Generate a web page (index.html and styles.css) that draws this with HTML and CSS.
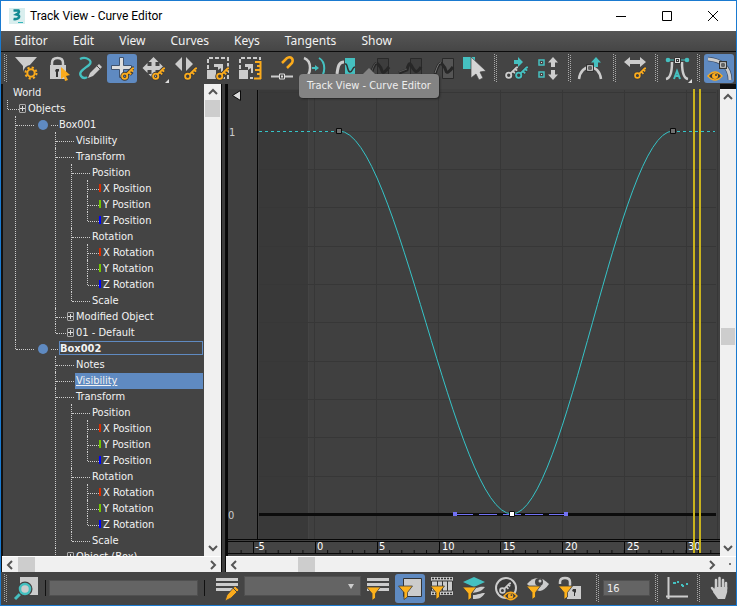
FILE: index.html
```html
<!DOCTYPE html>
<html lang="en">
<head>
<meta charset="utf-8">
<title>Track View - Curve Editor</title>
<link rel="stylesheet" href="styles.css">
</head>
<body>
<svg class="defs" aria-hidden="true">
  <defs>
    <symbol id="key" viewBox="0 0 14 14" overflow="visible">
      <g fill="none" stroke="#3c3c3c" stroke-width="4"><circle cx="4" cy="10" r="2.800"/><path d="M6 8 12.500 1.500H14M9 5l3 3"/></g>
      <g fill="none" stroke="currentColor" stroke-width="2"><circle cx="4" cy="10" r="2.800"/><path d="M6 8 12.500 1.500H14M8.500 5.500l2.500 2.500M11 3l2 2"/></g>
    </symbol>
    <symbol id="funnel" viewBox="0 0 13 13" overflow="visible">
      <path d="M-.5 0h14L8.500 6.500V11L5 13.500v-7z" fill="#fdb11b" stroke="#3c3c3c" stroke-width=".8"/>
    </symbol>
    <symbol id="eye" viewBox="0 0 14 8" overflow="visible">
      <path d="M0 4Q7-4 14 4 7 12 0 4z" fill="#3c3c3c" stroke="currentColor" stroke-width="1.500"/><circle cx="7" cy="4" r="3" fill="currentColor"/><circle cx="8" cy="3" r="1" fill="#3c3c3c"/>
    </symbol>
    <symbol id="corner" viewBox="0 0 4 4"><path d="M4 0v4H0z" fill="#ddd"/></symbol>
    <symbol id="node" viewBox="0 0 7 7"><path d="M.5.5h6v6h-6z" fill="#ddd" stroke="#333"/><path d="M2 2h3v3H2z" fill="#333"/><path d="M3 3h1v1H3z" fill="#ddd"/></symbol>
    <symbol id="up" viewBox="0 0 10 10"><path d="M5 0l5 5.500H7V10H3V5.500H0z" fill="currentColor"/></symbol>
  </defs>
</svg>
<div class="window">
  <header class="titlebar">
    <svg class="app-icon" width="16" height="16" viewBox="0 0 16 16"><path fill="#d9eeee" d="M0 0h16v16H0z"/><path d="M4.500 2.500h5q1.500 2-2 4 4 1 2 3.500-2 1.500-5 1" fill="none" stroke="#128a92" stroke-width="2.600"/><path d="M9 14.500h5" stroke="#35b5bb"/></svg>
    <h1>Track View - Curve Editor</h1>
    <div class="caption">
      <button aria-label="Minimize"><svg width="12" height="12" viewBox="0 0 12 12"><path d="M1 6.500h10"/></svg></button>
      <button aria-label="Maximize"><svg width="12" height="12" viewBox="0 0 12 12"><path d="M1.500 1.500h9v9h-9z"/></svg></button>
      <button aria-label="Close"><svg width="12" height="12" viewBox="0 0 12 12"><path d="M1 1l10 10M11 1 1 11"/></svg></button>
    </div>
  </header>
  <nav class="menu">
    <button>Editor</button><button>Edit</button><button>View</button><button>Curves</button><button>Keys</button><button>Tangents</button><button>Show</button>
  </nav>
  <div class="toolbar" role="toolbar">
    <span class="grip"></span>
    <button class="tool" aria-label="Filters"><svg viewBox="0 0 30 29"><path d="M4 3h22l-8 9v11l-6-6v-5z" fill="#ccc"/><circle cx="20" cy="19" r="5.500" fill="none" stroke="#444" stroke-width="5"/><circle cx="20" cy="19" r="5.500" fill="none" stroke="#fbab1c" stroke-width="2" stroke-dasharray="2.160 2.160"/><circle cx="20" cy="19" r="3.700" fill="#444" stroke="#fbab1c" stroke-width="2"/></svg></button>
    <button class="tool" aria-label="Lock selection"><svg viewBox="0 0 30 29"><path d="M9 12V9q0-5 5.500-5T20 9v3" fill="none" stroke="#ccc" stroke-width="2.500"/><path d="M7 11h16v14H7z" fill="#ccc"/><path d="M13 15h3v2l-1 1v5h-2v-5l-1-1z" fill="#333"/><path d="M18 13l9 8-4 1 2 4-3 1-1-4-3 2z" fill="#fbab1c"/></svg></button>
    <button class="tool" aria-label="Draw curves"><svg viewBox="0 0 30 29"><path d="M5 5c6-3 14 2 9 6S3 18 6 22c2 3 5 2 6 1" fill="none" stroke="#45c0c0" stroke-width="2.300"/><path d="M24 10l3 3-9 9-5 2 2-5z" fill="#ccc"/><path d="M22 12l3 3" stroke="#444"/></svg></button>
    <button class="tool active" aria-label="Add keys"><svg viewBox="0 0 30 29"><path d="M12.500 3.500h4v8h8v4h-8v8h-4v-8h-8v-4h8z" fill="#ddd" stroke="#40536e"/><use href="#key" x="14" y="13" width="13" height="13" color="#fbab1c"/></svg></button>
    <button class="tool" aria-label="Move keys"><svg viewBox="0 0 30 29"><path d="M14.500 3l5 5h-3v4h4V9l5 5-5 5v-3h-4v4h3l-5 5-5-5h3v-4h-4v3l-5-5 5-5v3h4V8h-3z" fill="#ccc"/><use href="#key" x="13" y="13" width="13" height="13" color="#fbab1c"/><use href="#corner" x="26" y="25" width="4" height="4"/></svg></button>
    <button class="tool" aria-label="Slide keys"><svg viewBox="0 0 30 29"><path d="M4 10l7-7v14zM22 10l-7-7v14z" fill="#ccc"/><use href="#key" x="13" y="13" width="13" height="13" color="#fbab1c"/></svg></button>
    <button class="tool" aria-label="Scale keys"><svg viewBox="0 0 30 29"><path d="M5 15V4h20v20H15" fill="none" stroke="#ccc" stroke-width="2" stroke-dasharray="4 2"/><path d="M4 16h9v9H4zM11 10h9v9h-2v-5l-3 2v-3h-4z" fill="#ccc"/><use href="#key" x="13" y="13" width="13" height="13" color="#fbab1c"/></svg></button>
    <button class="tool" aria-label="Scale values"><svg viewBox="0 0 30 29"><path d="M5 15V4h20v2M15 24h3" fill="none" stroke="#ccc" stroke-width="2" stroke-dasharray="4 2"/><path d="M4 16h9v9H4zM10 10h8v9h-2v-5l-3 2v-3h-3z" fill="#ccc"/><path d="M20 8h5M22 12h3M20 16h5M22 20h3M19 24.500h7M25.500 7v18" fill="none" stroke="#fbab1c" stroke-width="2"/></svg></button>
    <button class="tool" aria-label="Snap frames"><svg viewBox="0 0 30 29"><path d="M15 9l5-5c4-2 7 1 5 5l-5 5" fill="none" stroke="#fbab1c" stroke-width="2.500"/><path d="M4 22.500h8M18 22.500h8" stroke="#ccc" stroke-width="2"/><path d="M12.500 20h5v5h-5z" fill="none" stroke="#ddd"/><path d="M14 21.500h2v2h-2z" fill="#ddd"/></svg></button>
    <button class="tool" aria-label="Parameter out-of-range"><svg viewBox="0 0 30 29"><path d="M5 4c8 3 8 16 0 21" fill="none" stroke="#ccc" stroke-width="2.500"/><path d="M20 4c7 4 7 16 0 21M13 14h4" fill="none" stroke="#45c0c0" stroke-width="2"/><path d="M16 11l4 3-4 3z" fill="#45c0c0"/></svg></button>
    <button class="tool" aria-label="Ease curve"><svg viewBox="0 0 30 29"><path d="M6 20c1-8 2-12 7-12" fill="none" stroke="#ccc" stroke-width="3"/><path d="M14 4h10v20H14z" fill="#45c0c0"/><path d="M14 10c3-1 2 8 5 8s2-5 5-5" fill="none" stroke="#333" stroke-width="1.500"/></svg></button>
    <button class="tool" aria-label="Ease curve on" disabled><svg viewBox="0 0 30 29"><path d="M14.500 4.500h11v20h-11z" fill="#3d3d3d" stroke="#292929"/><path d="M8 20q4-13 7-10t4 7 7-4" fill="none" stroke="#272727" stroke-width="3"/><path d="M8 19q4-12 6-10" fill="none" stroke="#555"/></svg></button>
    <button class="tool" aria-label="Ease curve delete" disabled><svg viewBox="0 0 30 29"><path d="M15.500 4.500h11v20h-11z" fill="#3d3d3d" stroke="#292929"/><path d="M4 19l8-3q2-9 4-5t4 6 6-4" fill="none" stroke="#272727" stroke-width="3"/><path d="M4 18l8-3" stroke="#555"/></svg></button>
    <button class="tool" aria-label="Multiplier curve" disabled><svg viewBox="0 0 30 29"><path d="M15.500 4.500h11v20h-11z" fill="#555" stroke="#292929"/><path d="M8 20q4-13 7-10t4 7 7-4" fill="none" stroke="#272727" stroke-width="3"/><path d="M8 19q4-12 6-10" fill="none" stroke="#777"/></svg></button>
    <button class="tool" aria-label="Select tool"><svg viewBox="0 0 30 29"><path d="M4 3h12v12H4z" fill="#45c0c0"/><path d="M12 3l15 14-6 1 3 6-4 2-3-6-5 4z" fill="#d5d5d5" stroke="#444" stroke-width=".7"/></svg></button>
    <span class="grip"></span>
    <button class="tool" aria-label="Copy keys"><svg viewBox="0 0 30 29"><path d="M13 6h4V3l5 5-5 5v-3h-4z" fill="#45c0c0"/><use href="#key" x="4" y="12" width="13" height="13" color="#ccc"/><use href="#key" x="14" y="12" width="13" height="13" color="#45c0c0"/></svg></button>
    <button class="tool" aria-label="Flip keys"><svg viewBox="0 0 30 29"><path d="M6 6h5v5H6zM6 18h5v5H6z" fill="none" stroke="#45c0c0" stroke-width="1.500"/><path d="M8 8h1v1H8zM8 20h1v1H8z" fill="#ddd"/><g color="#ccc"><use href="#up" x="15" y="3" width="10" height="10"/><use href="#up" x="15" y="3" width="10" height="10" transform="matrix(1 0 0 -1 0 29)"/></g></svg></button>
    <span class="grip"></span>
    <button class="tool wide" aria-label="Tangent up"><svg viewBox="0 0 30 29"><path d="M4 25c2-16 20-16 22 0" fill="none" stroke="#ccc" stroke-width="2.500"/><use href="#up" x="16" y="3" width="10" height="10" color="#45c0c0"/><use href="#node" x="11" y="10" width="8" height="8"/></svg></button>
    <span class="grip"></span>
    <button class="tool" aria-label="Scale time"><svg viewBox="0 0 30 29"><path d="M4 8l6-5v3h10V3l6 5-6 5v-3H10v3z" fill="#ccc"/><use href="#key" x="14" y="13" width="12" height="12" color="#fbab1c"/></svg></button>
    <span class="grip"></span>
    <button class="tool" aria-label="Auto tangents"><svg viewBox="0 0 30 29"><path d="M10 8q0 16-6 17M20 8q0 16 6 17" fill="none" stroke="#ccc" stroke-width="2.500"/><path d="M6 6h19" stroke="#45c0c0"/><circle cx="6" cy="6" r="2.300" fill="#45c0c0"/><circle cx="25" cy="6" r="2.300" fill="#45c0c0"/><use href="#node" x="12" y="3" width="7" height="7"/><path d="M12 25l3-8 3 8M13 22h4" fill="none" stroke="#45c0c0" stroke-width="2"/><use href="#corner" x="26" y="25" width="4" height="4"/></svg></button>
    <span class="grip"></span>
    <button class="tool active" aria-label="Show tangents"><svg viewBox="0 0 30 29"><path d="M4 5c14 1 22 9 22 21" fill="none" stroke="#3c4d66" stroke-width="4.500"/><path d="M4 5c14 1 22 9 22 21" fill="none" stroke="#ccc" stroke-width="3"/><use href="#node" x="15" y="7" width="8" height="8"/><use href="#eye" x="4" y="18" width="14" height="8" color="#fbab1c"/></svg></button>
    <div class="tooltip" role="tooltip">Track View - Curve Editor</div>
  </div>

  <main class="workspace">
    <section class="tree-pane">
      <div class="tree">
        <ul class="root"><li><div class="row">World</div>
          <ul class="world"><li><div class="row plus">Objects</div>
            <ul class="objects">
              <li><div class="row"><span>Box001</span></div>
                <ul>
                  <li><div class="row">Visibility</div></li>
                  <li><div class="row">Transform</div>
                    <ul>
                      <li><div class="row">Position</div>
                        <ul class="axes"><li><div class="row x">X Position</div></li><li><div class="row y">Y Position</div></li><li><div class="row z">Z Position</div></li></ul></li>
                      <li><div class="row">Rotation</div>
                        <ul class="axes"><li><div class="row x">X Rotation</div></li><li><div class="row y">Y Rotation</div></li><li><div class="row z">Z Rotation</div></li></ul></li>
                      <li><div class="row">Scale</div></li>
                    </ul></li>
                  <li><div class="row plus">Modified Object</div></li>
                  <li><div class="row plus">01 - Default</div></li>
                </ul></li>
              <li><div class="row"><span class="current">Box002</span></div>
                <ul>
                  <li><div class="row">Notes</div></li>
                  <li><div class="row"><span class="selected">Visibility</span></div></li>
                  <li><div class="row">Transform</div>
                    <ul>
                      <li><div class="row">Position</div>
                        <ul class="axes"><li><div class="row x">X Position</div></li><li><div class="row y">Y Position</div></li><li><div class="row z">Z Position</div></li></ul></li>
                      <li><div class="row">Rotation</div>
                        <ul class="axes"><li><div class="row x">X Rotation</div></li><li><div class="row y">Y Rotation</div></li><li><div class="row z">Z Rotation</div></li></ul></li>
                      <li><div class="row">Scale</div></li>
                    </ul></li>
                  <li><div class="row plus">Object (Box)</div></li>
                </ul></li>
            </ul></li></ul></li></ul>
      </div>
      <div class="scroll vertical">
        <button aria-label="Scroll up"><svg width="10" height="10" viewBox="0 0 10 10"><path d="M1 7l4-4 4 4"/></svg></button>
        <i class="thumb"></i><i class="rest"></i>
        <button aria-label="Scroll down"><svg width="10" height="10" viewBox="0 0 10 10"><path d="M1 3l4 4 4-4"/></svg></button>
      </div>
      <div class="scroll horizontal">
        <button aria-label="Scroll left"><svg width="10" height="10" viewBox="0 0 10 10"><path d="M7 1 3 5l4 4"/></svg></button>
        <i class="thumb"></i><i class="rest"></i>
        <button aria-label="Scroll right"><svg width="10" height="10" viewBox="0 0 10 10"><path d="M3 1l4 4-4 4"/></svg></button>
      </div>
    </section>
    <div class="splitter"></div>
    <section class="graph-pane">
      <svg class="graph" viewBox="226 84 494 472" role="img" aria-label="Visibility curve">
        <defs>
          <pattern id="minor" x="253" y="550" width="12.360" height="3" patternUnits="userSpaceOnUse"><path d="M0 0h1v3H0z" fill="#0c0c0c"/></pattern>
        </defs>
        <path fill="#404040" d="M226 84h494v472H226z"/>
        <path fill="#444" d="M226 84h494v5H226z"/>
        <path fill="#393939" d="M259 90h49v449h-49z"/>
        <path stroke="#444" d="M308.500 90v449"/>
        <g stroke="#373737" shape-rendering="crispEdges">
          <path d="M314.500 90v449M376.500 90v449M438.500 90v449M500.500 90v449M562.500 90v449M624.500 90v449M686.500 90v449M717.500 90v449"/>
          <path d="M259 92.500h457M259 131.500h457M259 169.500h457M259 207.500h457M259 246.500h457M259 284.500h457M259 322.500h457M259 361.500h457M259 399.500h457M259 437.500h457M259 476.500h457"/>
        </g>
        <path fill="#070707" d="M226 84h2v472h-2zM257 90h1v449h-1zM228 539h492v1H228zM228 541h492v1H228zM228 553h492v1H228z"/>
        <path fill="#444" d="M229 542h491v11H229z"/>
        <path fill="url(#minor)" d="M229 550h491v3H229z"/>
        <path fill="#070707" d="M253 541h1v12h-1zM315 541h1v12h-1zM377 541h1v12h-1zM439 541h1v12h-1zM500 541h1v12h-1zM562 541h1v12h-1zM624 541h1v12h-1zM686 541h1v12h-1z"/>
        <path fill="#0c0c0c" d="M259 513h457v3H259z"/>
        <path d="M259 131.500h78M677 131.500h38" stroke="#35c4c8" stroke-dasharray="3 3"/>
        <path d="M339 131C397 131 455 514 512 514 566 514 619 131 673 131" fill="none" stroke="#35c4c8"/>
        <path d="M455 514.500h18M479 514.500h18M503 514.500h18M525 514.500h18M549 514.500h18" stroke="#7272f5"/>
        <path fill="#7272f5" d="M453 512h4v4h-4zM564 512h4v4h-4z"/>
        <path fill="#707070" stroke="#0a0a0a" d="M336.500 128.500h5v5h-5zM670.500 128.500h5v5h-5z"/>
        <path fill="#fff" stroke="#0a0a0a" d="M509.500 511.500h5v5h-5z"/>
        <path d="M232.500 95.500l8-5v10z" fill="#ddd" stroke="#0a0a0a"/>
        <g class="graph-text"><text x="229" y="136">1</text><text x="228" y="519">0</text></g>
        <g class="graph-text ruler"><text x="255" y="550">-5</text><text x="317" y="550">0</text><text x="379" y="550">5</text><text x="442" y="550">10</text><text x="503" y="550">15</text><text x="565" y="550">20</text><text x="627" y="550">25</text><text x="688" y="550">30</text></g>
        <path fill="#c9b31d" d="M693 89h2v464h-2zM699 89h2v464h-2z"/>
      </svg>
      <div class="scroll vertical">
        <button aria-label="Scroll up"><svg width="10" height="10" viewBox="0 0 10 10"><path d="M1 7l4-4 4 4"/></svg></button>
        <i class="lead"></i><i class="thumb"></i><i class="rest"></i>
        <button aria-label="Scroll down"><svg width="10" height="10" viewBox="0 0 10 10"><path d="M1 3l4 4 4-4"/></svg></button>
      </div>
      <div class="scroll horizontal">
        <button aria-label="Scroll left"><svg width="10" height="10" viewBox="0 0 10 10"><path d="M7 1 3 5l4 4"/></svg></button>
        <i class="lead"></i><i class="thumb"></i><i class="rest"></i>
        <button aria-label="Scroll right"><svg width="10" height="10" viewBox="0 0 10 10"><path d="M3 1l4 4-4 4"/></svg></button>
        <i class="size-grip"></i>
      </div>
    </section>
  </main>

  <footer class="toolbar status">
    <span class="grip"></span>
    <button class="tool" aria-label="Zoom selected object"><svg viewBox="0 0 30 29"><path d="M9 3h18v18H9z" fill="#ccc"/><path d="M11 18l-7 7" stroke="#45c0c0" stroke-width="3"/><circle cx="14" cy="15" r="5.500" fill="#ccc" stroke="#444" stroke-width="4"/><circle cx="14" cy="15" r="5" fill="#ccc" stroke="#45c0c0" stroke-width="2.500"/></svg></button>
    <span class="rule near"></span>
    <input class="field name" type="text" aria-label="Object name">
    <span class="rule"></span>
    <button class="tool" aria-label="Edit track set"><svg viewBox="0 0 30 29"><path d="M4 5.500h22M4 10.500h22M4 15.500h22" stroke="#ccc" stroke-width="3"/><path d="M23 12l4 4-8 8-6 3 2-6z" fill="#fbab1c" stroke="#444" stroke-width=".8"/><path d="M21 14l4 4" stroke="#444"/></svg></button>
    <label class="picker"><select class="field" aria-label="Track set"><option></option></select></label>
    <button class="tool" aria-label="Filter tracks"><svg viewBox="0 0 30 29"><path d="M4 5.500h22M4 10.500h22M4 15.500h22" stroke="#ccc" stroke-width="3"/><use href="#funnel" x="4" y="13" width="13" height="13"/></svg></button>
    <button class="tool active" aria-label="Filter selected objects"><svg viewBox="0 0 30 29"><path d="M8.500 4.500h18v18h-18z" fill="#ccc" stroke="#333"/><use href="#funnel" x="4" y="12" width="13" height="13"/></svg></button>
    <button class="tool" aria-label="Filter animated tracks"><svg viewBox="0 0 30 29"><path d="M4 3h22v18H4z" fill="#ccc"/><path d="M5 4.500h21M5 19.500h21" stroke="#333" stroke-width="1.500" stroke-dasharray="2 1"/><path d="M4.500 7h21v10h-21zM10.500 7v10M15.500 7v10M20.500 7v10" fill="none" stroke="#333"/><use href="#funnel" x="4" y="12" width="13" height="13"/></svg></button>
    <button class="tool" aria-label="Filter active layer"><svg viewBox="0 0 30 29"><path d="M4 8l11-5 11 5-11 5z" fill="#45c0c0"/><path d="M15 14c5 0 5-2 11-1-3 4-7 5-12 6M14 21c5 0 7-2 12-2-3 5-6 6-12 6" fill="#ccc"/><use href="#funnel" x="4" y="13" width="13" height="13"/></svg></button>
    <button class="tool" aria-label="Filter keyable tracks"><svg viewBox="0 0 30 29"><circle cx="15" cy="14" r="10" fill="#3c3c3c" stroke="#ccc" stroke-width="2"/><use href="#key" x="8" y="8" width="12" height="12" color="#ccc"/><use href="#eye" x="13" y="18" width="13" height="8" color="#fbab1c"/></svg></button>
    <button class="tool" aria-label="Filter visible objects"><svg viewBox="0 0 30 29"><path d="M4 10Q14-2 26 10q-4 6-9 7-8-1-13-7z" fill="#ccc"/><circle cx="16" cy="8" r="4" fill="#444"/><circle cx="17" cy="7" r="1.500" fill="#ccc"/><use href="#funnel" x="4" y="12" width="13" height="13"/></svg></button>
    <button class="tool" aria-label="Filter unlocked attributes"><svg viewBox="0 0 30 29"><path d="M5 10V8q0-4 5-4t5 4v4" fill="none" stroke="#ccc" stroke-width="2.500"/><path d="M12 12h14v13H12z" fill="#ccc"/><path d="M18 15h3v3l-1 1v3h-1v-4l-2-1z" fill="#333"/><use href="#funnel" x="4" y="12" width="13" height="13"/></svg></button>
    <span class="grip apart"></span>
    <input class="field frame" type="text" value="16" aria-label="Key time">
    <span class="grip"></span>
    <button class="tool" aria-label="Key stats"><svg viewBox="0 0 30 29"><path d="M6.500 3v22M4 22.500h22" fill="none" stroke="#ccc" stroke-width="2"/><path d="M11 9h3M15 8h2M19 11h2M20 12h2M24 10h2" stroke="#45c0c0" stroke-width="2"/></svg></button>
    <span class="grip"></span>
    <button class="tool" aria-label="Pan"><svg viewBox="0 0 30 29"><path d="M12 15V6M15.500 14V4M19 14V6M22 15V9M12 19l-4-5" fill="none" stroke="#ccc" stroke-width="2.500" stroke-linecap="round"/><path d="M11 13h12.200v5l-2.200 7h-7l-5-7z" fill="#ccc"/></svg></button>
  </footer>
</div>
</body>
</html>
```
FILE: styles.css
```css
*, *::before, *::after { box-sizing: border-box; }
body { margin: 0; background: #444; }
button { border: 0; padding: 0; background: none; color: inherit; font: inherit; }
ul { list-style: none; margin: 0; padding: 0; }
.defs { position: absolute; width: 0; height: 0; }

.window {
  display: flex;
  flex-direction: column;
  height: 100vh;
  border: 1px solid #1a7ad0;
  background: #444;
  color: #f2f2f2;
  font: 11px/16px "DejaVu Sans Condensed", "Noto Sans", sans-serif;
  overflow: hidden;
}

.titlebar {
  display: flex;
  align-items: center;
  height: 30px;
  flex: none;
  padding-left: 8px;
  background: #fff;
  color: #000;
}
.titlebar h1 { margin: 0 auto 0 5px; font: 12px/16px Roboto, "Noto Sans", sans-serif; }
.caption { display: flex; }
.caption button { width: 46px; height: 28px; display: grid; place-items: center; }
.caption path { fill: none; stroke: #000; }

.menu {
  display: flex;
  flex: none;
  gap: 25px;
  height: 21px;
  padding-left: 13px;
  border-bottom: 1px solid #0c0c0c;
  background: linear-gradient(#565656, #464646);
  font: 12px/20px "Noto Sans", sans-serif;
}

.toolbar {
  position: relative;
  display: flex;
  flex: none;
  gap: 2px;
  height: 32px;
  padding: 2px 2px 0 0;
}
.status { height: 33px; }
.tool { flex: none; width: 30px; height: 29px; border-radius: 3px; }
.tool.wide { width: 33px; padding-right: 3px; }
.tool svg { display: block; width: 30px; height: 29px; }
.tool.active { background: #5f8ac1; }
.grip {
  flex: none;
  width: 8px;
  height: 28px;
  background:
    repeating-linear-gradient(#aaa 0 1px, transparent 1px 2px) 3px 0 / 1px 28px no-repeat,
    repeating-linear-gradient(transparent 0 1px, #aaa 1px 2px) 5px 0 / 1px 28px no-repeat;
}
.grip.apart { margin-left: 6px; }
.rule { flex: none; width: 1px; height: 16px; margin: 6px 5px 0 4px; background: #111; }
.rule.near { margin: 6px 1px 0 2px; }

.tooltip {
  position: absolute;
  z-index: 2;
  left: 298px;
  top: 22px;
  padding: 4px 8px;
  border-radius: 4px;
  background: #838383;
  box-shadow: 1px 1px 2px #222;
  color: #eee;
  white-space: nowrap;
}
.tooltip::before {
  content: "";
  position: absolute;
  left: 64px;
  top: -6px;
  border: 6px solid transparent;
  border-top: 0;
  border-bottom-color: #838383;
}

.workspace { display: flex; flex: 1; min-height: 0; padding-left: 1px; background: #111; }
.tree-pane {
  display: grid;
  grid-template: minmax(0, 1fr) 16px / minmax(0, 1fr) 17px;
  flex: 0 0 219px;
  background: #444;
}
.tree { overflow: hidden; border-left: 1px solid #111; }
.tree .row { height: 16px; padding: 1px 0 0 21px; white-space: nowrap; }
.tree .row > span { display: block; }
.tree li { position: relative; }
.tree ul ul { margin-left: 16px; }
.tree .root > li > .row { padding-left: 10px; }
.tree ul.world { margin-left: 4px; }
.tree ul.objects { margin-left: 8px; }
.tree .objects > li > .row { padding-left: 44px; }
.tree .objects > li > ul { margin-left: 40px; }
.tree ul ul > li::before {
  content: "";
  position: absolute;
  left: 0;
  top: 0;
  bottom: 0;
  border-left: 1px dotted #ccc;
}
.tree ul ul > li:last-child::before { bottom: auto; height: 9px; }
.tree ul ul > li::after {
  content: "";
  position: absolute;
  left: 1px;
  top: 9px;
  width: 18px;
  border-top: 1px dotted #ccc;
}
.tree ul.world > li::after, .tree ul.axes > li::after { width: 11px; }
.plus::before {
  content: "";
  position: absolute;
  z-index: 1;
  left: 12px;
  top: 4px;
  width: 7px;
  height: 9px;
  border: 1px solid #aaa;
  border-radius: 1px;
  background:
    linear-gradient(#ddd, #ddd) 50% 50% / 5px 1px no-repeat,
    linear-gradient(#ddd, #ddd) 50% 50% / 1px 5px no-repeat,
    #444;
}
.objects > li > .row::before {
  content: "";
  position: absolute;
  left: 23px;
  top: 4px;
  width: 10px;
  height: 10px;
  border-radius: 50%;
  background: #5f8ac1;
}
.objects > li > .row::after {
  content: "";
  position: absolute;
  left: 36px;
  top: 9px;
  width: 7px;
  border-top: 1px dotted #ccc;
}
.tree .axes .row { padding-left: 16px; }
.axes .row::before { content: ""; position: absolute; left: 12px; top: 4px; width: 2px; height: 8px; }
.axes .x::before { background: #d62b00; }
.axes .y::before { background: #72c400; }
.axes .z::before { background: #00f; }
.current { height: 14px; margin-right: 1px; border: 1px solid #5f8ac1; font-weight: bold; line-height: 13px; }
.selected { margin: 0 1px 0 -1px; padding-left: 1px; background: #5f8ac1; text-decoration: underline; }

.scroll { display: flex; background: #f0f0f0; }
.scroll button { display: grid; place-items: center; flex: 0 0 16px; }
.scroll path { fill: none; stroke: #555; stroke-width: 2; }
.vertical { flex-direction: column; }
.horizontal { grid-column: 1 / -1; border-top: 1px solid #fff; }
.thumb { flex: 0 0 17px; background: #cdcdcd; }
.vertical .thumb { margin: 0 1px; }
.rest { flex: 1; }

.splitter { flex: 0 0 5px; border: solid #0a0a0a; border-width: 0 1px 0 1px; background: #3c3c3c; }
.graph-pane {
  display: grid;
  grid-template: minmax(0, 1fr) 16px / minmax(0, 1fr) 16px;
  flex: 1;
  min-width: 0;
}
.graph-pane .vertical { border-top: 5px solid #111; }
.graph-pane .vertical .lead { flex: 223; }
.graph-pane .vertical .rest { flex: 195; }
.graph-pane .horizontal .lead { flex: 56; }
.graph-pane .horizontal .rest { flex: 389; }
.size-grip { flex: 0 0 16px; background: radial-gradient(circle at 10px 7px, #777 0 1px, transparent 1px); }
.graph { width: 100%; height: 100%; display: block; background: #404040; }
.graph-text { fill: #ccc; font: 11px "DejaVu Sans Condensed", sans-serif; }
.ruler { fill: #fff; }

.field {
  min-width: 0;
  padding: 0;
  border: 1px solid #505050;
  border-radius: 0;
  background: #646464;
  color: #eee;
  font: 11px/14px "DejaVu Sans Condensed", sans-serif;
}
.name { flex: 148 1 0; height: 16px; margin-top: 6px; }
.picker { position: relative; display: flex; flex: 118 1 0; min-width: 0; height: 20px; margin-top: 2px; }
.picker select { appearance: none; width: 100%; }
.picker::after {
  content: "";
  position: absolute;
  right: 7px;
  top: 8px;
  border: 3px solid transparent;
  border-bottom: 0;
  border-top: 5px solid #ccc;
}
.frame { flex: 0 0 47px; height: 16px; margin-top: 6px; padding: 0 3px; }
```
